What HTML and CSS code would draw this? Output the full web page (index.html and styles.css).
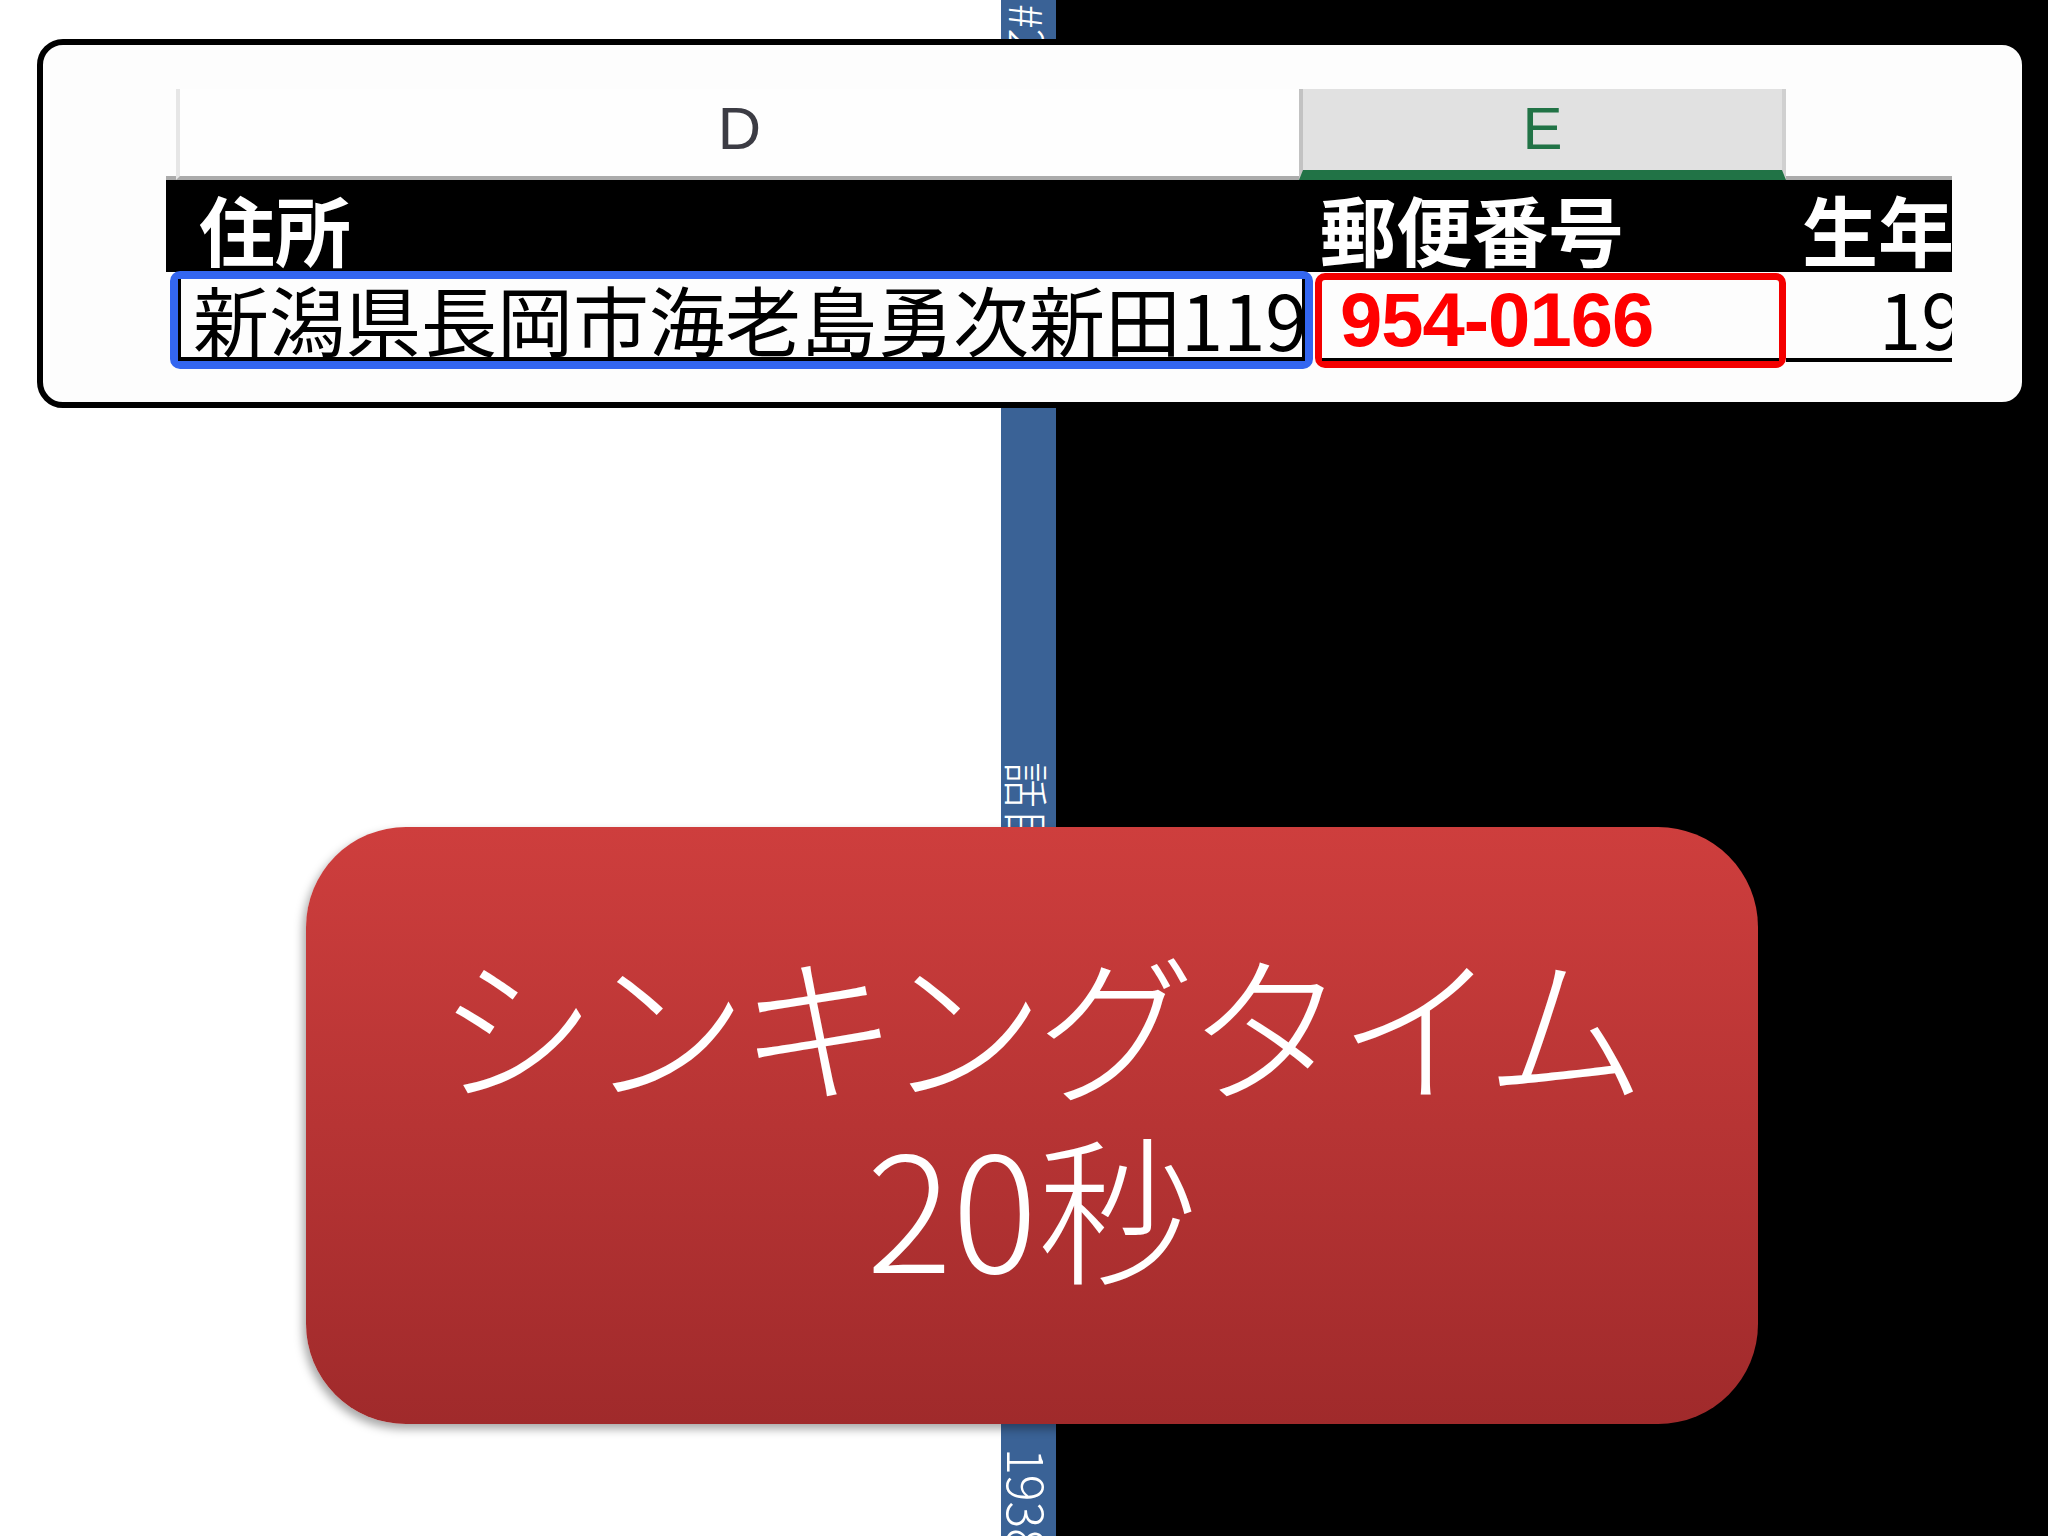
FILE: index.html
```html
<!DOCTYPE html>
<html lang="ja">
<head>
<meta charset="utf-8">
<title>シンキングタイム</title>
<link rel="stylesheet" href="styles.css">
</head>
<body>
<div class="stage">
  <div class="pane-left"></div>
  <div class="strip">
    <span class="vt vt-top">#2</span>
    <span class="vt vt-mid">話目</span>
    <span class="vt vt-bot">1938</span>
  </div>
  <div class="pane-right"></div>

  <div class="card">
    <div class="sheet">
      <div class="colhead">
        <div class="gut"></div>
        <div class="ch ch-d">D</div>
        <div class="ch ch-e">E</div>
        <div class="ch ch-f"></div>
      </div>
      <div class="hdr">
        <div class="hd hd-d">住所</div>
        <div class="hd hd-e">郵便番号</div>
        <div class="hd hd-f">生年月日</div>
      </div>
      <div class="data">
        <div class="dd"><div class="dd-in">新潟県長岡市海老島勇次新田1192</div></div>
        <div class="de"><div class="de-in">954-0166</div></div>
        <div class="df">1985/04/12</div>
      </div>
    </div>
  </div>

  <div class="callout">
    <div class="line line-1">シンキングタイム</div>
    <div class="line line-2">20秒</div>
  </div>
</div>
</body>
</html>
```

FILE: styles.css
```css
* { box-sizing: border-box; }
html, body { margin: 0; padding: 0; }
body { background: #000; font-family: "Noto Sans CJK JP", sans-serif; }

.stage {
  position: relative;
  width: 2048px;
  height: 1536px;
  display: flex;
  overflow: hidden;
}
.pane-left { width: 1001px; background: #ffffff; }
.pane-right { flex: 1; background: #000000; }

.strip {
  width: 55px;
  background: #3a6296;
  display: flex;
  flex-direction: column;
  align-items: center;
  color: #ffffff;
  font-family: "Noto Sans CJK JP", sans-serif;
  font-weight: 300;
  font-size: 46px;
}
.vt {
  flex-shrink: 0;
  writing-mode: vertical-rl;
  text-orientation: sideways;
  line-height: 55px;
  white-space: nowrap;
  overflow: hidden;
}
.vt-top { margin-top: 4px; height: 60px; }
.vt-mid { margin-top: 698px; height: 100px; }
.vt-bot { margin-top: 586px; height: 200px; font-size: 50px; }

/* ---------- card with spreadsheet excerpt ---------- */
.card {
  position: absolute;
  left: 37px;
  top: 39px;
  width: 1991px;
  height: 369px;
  border: 6px solid #000;
  border-radius: 26px;
  background: #fdfdfd;
  padding: 44px 0 0 123px;
}
.sheet { width: 1786px; overflow: hidden; }

.colhead { display: flex; height: 91px; }
.gut { width: 10px; border-bottom: 4px solid #ababab; }
.ch {
  display: flex;
  align-items: center;
  justify-content: center;
  font-family: "Liberation Sans", sans-serif;
  font-size: 60px;
  padding-bottom: 8px;
}
.ch-d {
  width: 1123px;
  background: #fefefe;
  border-left: 4px solid #e6e6e6;
  border-bottom: 4px solid #ababab;
  color: #3c3c44;
}
.ch-e {
  width: 487px;
  background: #e1e1e1;
  border-left: 4px solid #c2c2c2;
  border-right: 4px solid #d0d0d0;
  border-bottom: 10px solid #217346;
  color: #217346;
  padding-bottom: 2px;
}
.ch-f { flex: 1; border-bottom: 4px solid #ababab; }

.hdr {
  display: flex;
  height: 92px;
  background: #000;
  color: #fff;
  font-family: "Noto Sans CJK JP", sans-serif;
  font-weight: 700;
  font-size: 76px;
  line-height: 92px;
  white-space: nowrap;
  overflow: hidden;
}
.hd { height: 92px; padding-top: 2px; overflow: hidden; }
.hd-d { width: 1133px; padding-left: 33px; }
.hd-e { width: 487px; padding-left: 21px; }
.hd-f { flex: 1; padding-left: 16px; }

.data { display: flex; height: 98px; margin-top: -1px; }
.dd {
  margin-left: 4px;
  width: 1143px;
  height: 98px;
  border: 8px solid #3366f0;
  border-radius: 10px;
}
.dd-in {
  height: 100%;
  border-left: 3px solid #000;
  border-right: 3px solid #000;
  border-bottom: 4px solid #000;
  padding-left: 12px;
  font-size: 76px;
  line-height: 78px;
  color: #000;
  white-space: nowrap;
  overflow: hidden;
}
.de {
  margin-left: 2px;
  margin-top: 2px;
  width: 471px;
  height: 95px;
  border: 7px solid #f40000;
  border-radius: 10px;
}
.de-in {
  height: 100%;
  border-bottom: 3px solid #000;
  padding-left: 18px;
  font-family: "Liberation Sans", sans-serif;
  font-weight: 700;
  font-size: 76px;
  line-height: 80px;
  letter-spacing: -1px;
  color: #ff0000;
  white-space: nowrap;
}
.df {
  flex: 1;
  height: 91px;
  border-bottom: 4px solid #000;
  padding-left: 93px;
  font-size: 76px;
  line-height: 92px;
  color: #000;
  white-space: nowrap;
  overflow: hidden;
}

/* ---------- thinking-time callout ---------- */
.callout {
  position: absolute;
  left: 306px;
  top: 827px;
  width: 1452px;
  height: 597px;
  border-radius: 100px;
  background: linear-gradient(#ce3e3d, #a02a2b);
  box-shadow: -3px 5px 10px rgba(0, 0, 0, 0.35);
  display: flex;
  flex-direction: column;
  align-items: center;
  justify-content: center;
  padding-bottom: 28px;
  color: #fff;
  font-family: "Noto Sans CJK JP", sans-serif;
  font-weight: 300;
  font-size: 160px;
  line-height: 182px;
}
.line { white-space: nowrap; }
.line-1 { letter-spacing: -9px; padding-left: 9px; }
.line-2 { letter-spacing: 0; }
```
